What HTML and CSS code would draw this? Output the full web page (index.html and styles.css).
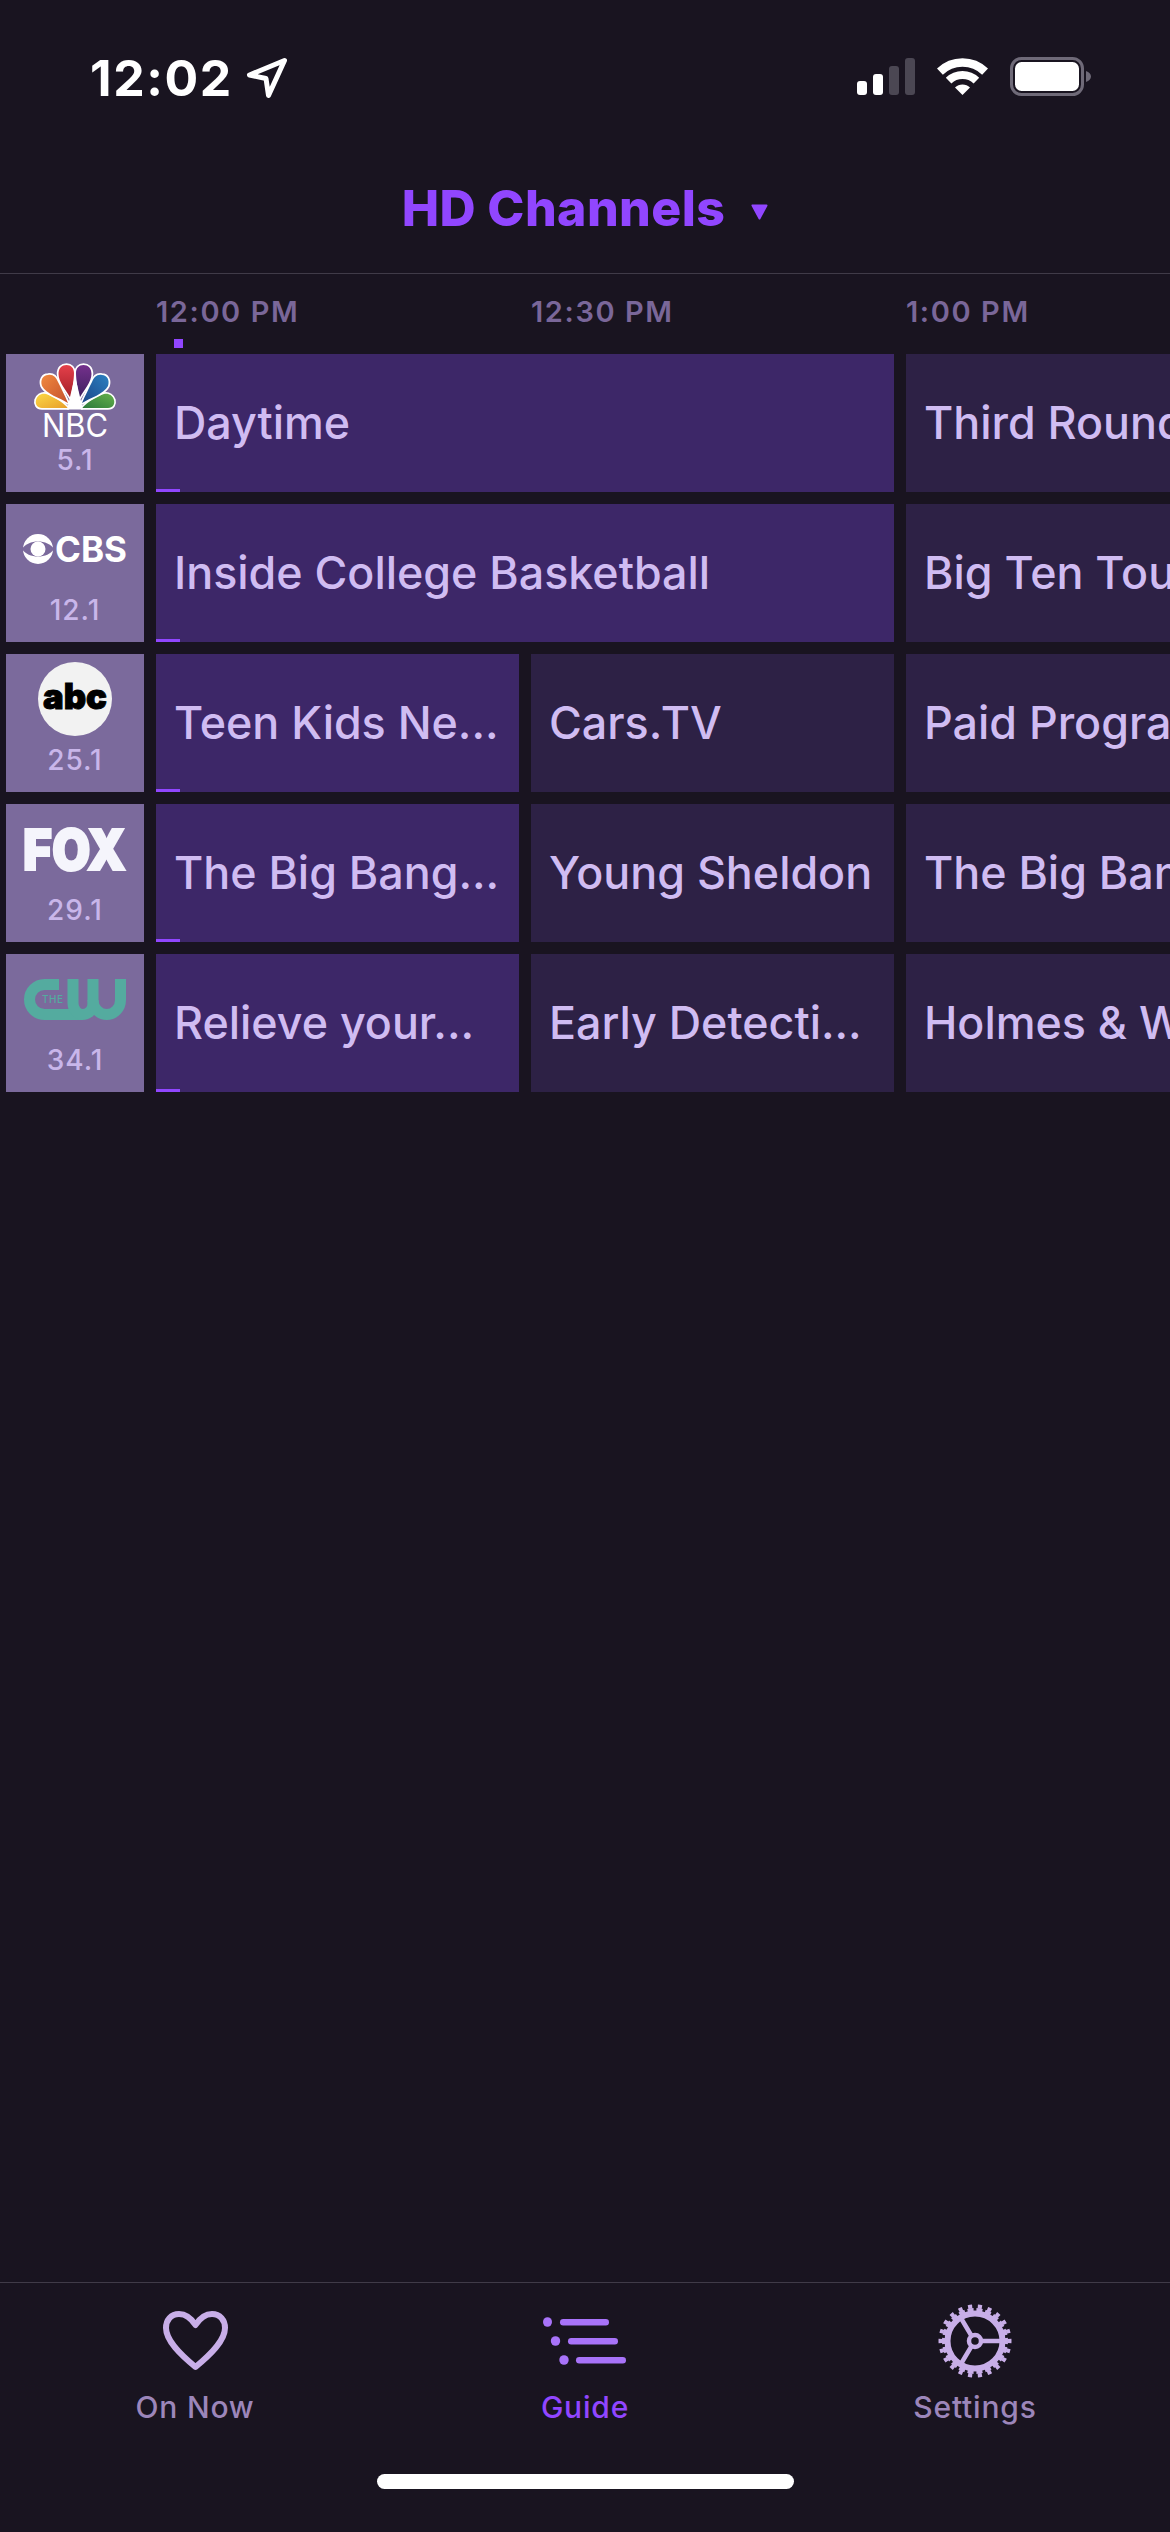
FILE: index.html
```html
<!DOCTYPE html>
<html lang="en">
<head>
<meta charset="utf-8">
<title>Guide</title>
<link rel="stylesheet" href="styles.css">
</head>
<body>
<div class="app">
  <header class="status">
    <div class="clock">
      <span>12:02</span>
      <svg class="arrow" viewBox="0 0 42 42" width="42" height="42"><path d="M38.5 3.5 3.5 18 20 21.5 22.5 38.5Z" fill="none" stroke="#fff" stroke-width="5" stroke-linejoin="round"/></svg>
    </div>
    <div class="sys">
      <svg viewBox="0 0 58 37" width="58" height="37" class="sig">
        <rect x="0" y="23" width="10" height="14" rx="3" fill="#fff"/>
        <rect x="16" y="16" width="10" height="21" rx="3" fill="#fff"/>
        <rect x="32" y="8" width="10" height="29" rx="3" fill="#4b4753"/>
        <rect x="48" y="0" width="10" height="37" rx="3" fill="#4b4753"/>
      </svg>
      <svg viewBox="0 0 51 37" width="51" height="37" class="wifi">
        <path d="M2.9 13.6A32.5 32.5 0 0 1 48.1 13.6" fill="none" stroke="#fff" stroke-width="8.5"/>
        <path d="M11.6 22.6A20 20 0 0 1 39.4 22.6" fill="none" stroke="#fff" stroke-width="8"/>
        <path d="M25.5 37 18 29.5A10.6 10.6 0 0 1 33 29.5Z" fill="#fff"/>
      </svg>
      <svg viewBox="0 0 81 39" width="81" height="39" class="batt">
        <rect x="1.5" y="1.5" width="71" height="36" rx="10" fill="none" stroke="#6f6a78" stroke-width="3"/>
        <rect x="5" y="5" width="64" height="29" rx="6.5" fill="#fff"/>
        <path d="M76 14C79 15 81 17 81 19.500S79 24 76 25Z" fill="#6f6a78"/>
      </svg>
    </div>
  </header>

  <div class="titlebar">
    <h1 class="title">HD Channels</h1>
    <svg class="caret" viewBox="0 0 17 16" width="17" height="16"><path d="M1.500 1.500H15.500L8.500 14.500Z" fill="#9146ff" stroke="#9146ff" stroke-width="2" stroke-linejoin="round"/></svg>
  </div>

  <div class="times">
    <span class="time">12:00 PM</span>
    <span class="time">12:30 PM</span>
    <span class="time">1:00 PM</span>
    <i class="marker"></i>
  </div>

  <main class="guide">
    <div class="row">
      <div class="chan">
        <svg class="logo" viewBox="0 0 138 92" width="138" height="92">
          <defs>
            <linearGradient id="gr" x1="0" y1="0" x2="0" y2="1"><stop offset="0" stop-color="#e5404a"/><stop offset="1" stop-color="#a31f28"/></linearGradient>
            <linearGradient id="gp" x1="0" y1="0" x2="0" y2="1"><stop offset="0" stop-color="#74308c"/><stop offset="1" stop-color="#3f2060"/></linearGradient>
            <linearGradient id="go" x1="0" y1="0" x2="1" y2="1"><stop offset="0" stop-color="#f0893f"/><stop offset="1" stop-color="#c4502c"/></linearGradient>
            <linearGradient id="gb" x1="1" y1="0" x2="0" y2="1"><stop offset="0" stop-color="#2b80c0"/><stop offset="1" stop-color="#1c4689"/></linearGradient>
            <linearGradient id="gy" x1="0" y1="0" x2="1" y2="1"><stop offset="0" stop-color="#fcd845"/><stop offset="1" stop-color="#e79e2a"/></linearGradient>
            <linearGradient id="gg" x1="1" y1="0" x2="0" y2="1"><stop offset="0" stop-color="#64b04c"/><stop offset="1" stop-color="#2c7a3a"/></linearGradient>
          </defs>
          <g stroke="#fff" stroke-width="3.500" stroke-linejoin="round" paint-order="stroke">
            <path d="M62 54 36 54C31 54 29 50 30 46 31 42 35 39 40 40 48 42 56 48 62 54Z" fill="url(#gy)"/>
            <path d="M76 54 102 54C107 54 109 50 108 46 107 42 103 39 98 40 90 42 82 48 76 54Z" fill="url(#gg)"/>
            <path d="M62 49C54 44 40 40 36 32 34 26 37 21 42 21 47 20 50 23 52 28 55 34 59 42 62 49Z" fill="url(#go)"/>
            <path d="M76 49C84 44 98 40 102 32 104 26 101 21 96 21 91 20 88 23 86 28 83 34 79 42 76 49Z" fill="url(#gb)"/>
            <path d="M64.500 44C60 36 52.500 28 52.500 20 52.500 14 56 11 60.500 11 65 11 68 14 68 19 68 26 66 36 64.500 44Z" fill="url(#gr)"/>
            <path d="M73.500 44C78 36 85.500 28 85.500 20 85.500 14 82 11 77.500 11 73 11 70 14 70 19 70 26 72 36 73.500 44Z" fill="url(#gp)"/>
          </g>
          <path d="M61 55.500H77L69 22Z" fill="#fff"/>
          <text x="36" y="83" class="t-nbc" textLength="66" lengthAdjust="spacingAndGlyphs">NBC</text>
        </svg>
        <span class="num">5.1</span>
      </div>
      <div class="prog now wide">Daytime</div>
      <div class="prog wide">Third Round</div>
    </div>

    <div class="row">
      <div class="chan">
        <svg class="logo" viewBox="0 0 138 92" width="138" height="92">
          <circle cx="32" cy="45" r="15" fill="#fff"/>
          <path d="M16 45C22 35 42 35 48 45 42 55 22 55 16 45Z" fill="#7b6a9c"/>
          <circle cx="32" cy="45" r="7.500" fill="#fff"/>
          <text x="49" y="58" class="t-cbs" textLength="72" lengthAdjust="spacingAndGlyphs">CBS</text>
        </svg>
        <span class="num">12.1</span>
      </div>
      <div class="prog now wide">Inside College Basketball</div>
      <div class="prog wide">Big Ten Tournament</div>
    </div>

    <div class="row">
      <div class="chan">
        <svg class="logo" viewBox="0 0 138 92" width="138" height="92">
          <circle cx="69" cy="45" r="37" fill="#f2f2f2"/>
          <text x="37" y="55" class="t-abc" textLength="64" lengthAdjust="spacingAndGlyphs">abc</text>
        </svg>
        <span class="num">25.1</span>
      </div>
      <div class="prog now half">Teen Kids Ne...</div>
      <div class="prog half">Cars.TV</div>
      <div class="prog wide">Paid Programming</div>
    </div>

    <div class="row">
      <div class="chan">
        <svg class="logo" viewBox="0 0 138 92" width="138" height="92">
          <text x="17" y="66" class="t-fox" textLength="103" lengthAdjust="spacingAndGlyphs">FOX</text>
        </svg>
        <span class="num">29.1</span>
      </div>
      <div class="prog now half">The Big Bang...</div>
      <div class="prog half">Young Sheldon</div>
      <div class="prog wide">The Big Bang Theory</div>
    </div>

    <div class="row">
      <div class="chan">
        <svg class="logo" viewBox="0 0 138 92" width="138" height="92">
          <g fill="none" stroke="#54ab9f" stroke-width="11">
            <path d="M53 30.500H38.500A15 15 0 0 0 38.500 60.500H76C83 60.500 87 55 87 49V25"/>
            <path d="M67 25V49C67 55 71 60.500 77 60.500"/>
            <path d="M87 46A13.750 14.500 0 0 0 114.500 46V25"/>
          </g>
          <text x="36" y="49" class="t-the">THE</text>
        </svg>
        <span class="num">34.1</span>
      </div>
      <div class="prog now half">Relieve your...</div>
      <div class="prog half">Early Detecti...</div>
      <div class="prog wide">Holmes &amp; Watson</div>
    </div>
  </main>

  <footer class="tabs">
    <nav class="tabrow">
      <a class="tab">
        <span class="ico"><svg viewBox="0 0 65 60" width="65" height="60"><path d="M32.500 14C28 7 22 3 16 3 8 3 3 9 3 17 3 30 18 44 32.500 56 47 44 62 30 62 17 62 9 57 3 49 3 43 3 37 7 32.500 14Z" fill="none" stroke="#c8aee8" stroke-width="6" stroke-linejoin="round"/></svg></span>
        <span class="lbl">On Now</span>
      </a>
      <a class="tab on">
        <span class="ico"><svg viewBox="0 0 84 48" width="84" height="48" fill="#a873f9">
          <ellipse cx="4.500" cy="5" rx="4.500" ry="4.800"/><rect x="17" y="2" width="49" height="6.500" rx="3.200"/>
          <ellipse cx="12.500" cy="24" rx="4.700" ry="4.800"/><rect x="25" y="21" width="50" height="6.500" rx="3.200"/>
          <ellipse cx="21" cy="43" rx="4.700" ry="4.800"/><rect x="33" y="40" width="50" height="6.500" rx="3.200"/>
        </svg></span>
        <span class="lbl">Guide</span>
      </a>
      <a class="tab">
        <span class="ico"><svg viewBox="0 0 74 74" width="74" height="74" fill="none" stroke="#c8aee8">
          <circle cx="37" cy="37" r="27.500" stroke-width="6"/>
          <circle cx="37" cy="37" r="31" stroke-width="4" pathLength="22" stroke-dasharray="0.680 0.320" stroke-dashoffset="0.340"/>
          <circle cx="37" cy="37" r="34.500" stroke-width="4" pathLength="22" stroke-dasharray="0.420 0.580" stroke-dashoffset="0.210"/>
          <circle cx="37" cy="37" r="6" stroke-width="4.500"/>
          <path d="M43 37H64M33.600 32 22 12.500M33.600 42 22 61.500" stroke-width="4.500"/>
        </svg></span>
        <span class="lbl">Settings</span>
      </a>
    </nav>
    <div class="home"></div>
  </footer>
</div>
</body>
</html>
```
FILE: styles.css
```css
* { box-sizing: border-box; }
html, body { margin: 0; padding: 0; background: #191420; }
body { font-family: Inter, "Liberation Sans", sans-serif; }

.app {
  width: 1170px;
  height: 2532px;
  display: flex;
  flex-direction: column;
  overflow: hidden;
  background: #191420;
}

/* status bar */
.status {
  height: 150px;
  padding: 48px 79px 0 90px;
  display: flex;
  justify-content: space-between;
  align-items: flex-start;
}
.clock {
  display: flex;
  align-items: center;
  gap: 13px;
  color: #fff;
  font-size: 50px;
  font-weight: 700;
  line-height: 60px;
  letter-spacing: 1.6px;
}
.arrow { display: block; }
.sys { display: flex; align-items: flex-start; gap: 22px; padding-top: 10px; }
.sys svg { display: block; }
.batt { margin-top: -1px; }

/* title */
.titlebar {
  height: 124px;
  padding-bottom: 8px;
  border-bottom: 1px solid #403b48;
  display: flex;
  justify-content: center;
  align-items: center;
  gap: 26px;
}
.title {
  margin: 0;
  color: #9146ff;
  font-size: 50px;
  font-weight: 800;
  line-height: 60px;
  letter-spacing: 0.4px;
}
.caret { display: block; margin-top: 8px; }

/* timeline */
.times {
  position: relative;
  height: 80px;
  padding: 20px 0 0 156px;
  display: flex;
  align-items: flex-start;
}
.time {
  flex: none;
  width: 375px;
  color: #7a6799;
  font-size: 29px;
  font-weight: 600;
  line-height: 36px;
  letter-spacing: 1.6px;
}
.marker {
  position: absolute;
  left: 174px;
  bottom: 6px;
  width: 9px;
  height: 9px;
  background: #9146ff;
}

/* grid */
.guide {
  flex: 1;
  display: flex;
  flex-direction: column;
  gap: 12px;
  padding-left: 6px;
  overflow: hidden;
}
.row {
  display: flex;
  gap: 12px;
  height: 138px;
}
.chan {
  flex: none;
  width: 138px;
  height: 138px;
  background: #7b6a9c;
  display: flex;
  flex-direction: column;
  align-items: center;
}
.logo { display: block; flex: none; }
.num {
  margin-top: -1px;
  color: #c9b6ea;
  font-size: 28px;
  font-weight: 500;
  line-height: 30px;
  letter-spacing: 1px;
}
.prog {
  position: relative;
  flex: none;
  height: 138px;
  padding-left: 18px;
  display: flex;
  align-items: center;
  background: #2d2145;
  color: #d0bcf2;
  font-size: 44.8px;
  font-weight: 500;
  white-space: nowrap;
  overflow: hidden;
}
.wide { width: 738px; }
.half { width: 363px; }
.now { background: #3d2768; }
.now::after {
  content: "";
  position: absolute;
  left: 0;
  bottom: 0;
  width: 24px;
  height: 3px;
  background: #9146ff;
}

/* logo text */
.t-nbc { font-size: 32px; font-weight: 400; fill: #fff; }
.t-cbs { font-size: 35px; font-weight: 700; fill: #fff; }
.t-abc { font-size: 35px; font-weight: 900; fill: #000; stroke: #000; stroke-width: 1px; }
.t-fox { font-size: 56px; font-weight: 900; fill: #f5f5fc; stroke: #f5f5fc; stroke-width: 2px; }
.t-the { font-size: 10px; font-weight: 500; fill: #54ab9f; letter-spacing: 0.5px; }

/* tab bar */
.tabs {
  height: 250px;
  border-top: 1px solid #403b48;
  display: flex;
  flex-direction: column;
  align-items: center;
}
.tabrow {
  align-self: stretch;
  display: flex;
  padding-top: 21px;
}
.tab {
  flex: 1;
  display: flex;
  flex-direction: column;
  align-items: center;
  color: #9c86ba;
}
.ico {
  height: 74px;
  display: flex;
  align-items: center;
  justify-content: center;
}
.ico svg { display: block; }
.lbl {
  margin-top: 12px;
  font-size: 30px;
  font-weight: 500;
  line-height: 34px;
  letter-spacing: 0.8px;
}
.on { color: #9146ff; }
.home {
  margin-top: 50px;
  width: 417px;
  height: 15px;
  border-radius: 8px;
  background: #fff;
}
```
